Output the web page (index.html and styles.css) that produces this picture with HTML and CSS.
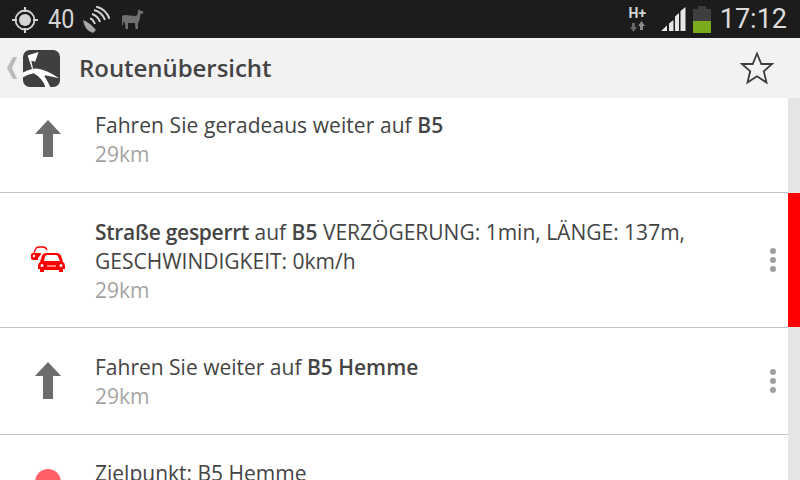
FILE: index.html
```html
<!DOCTYPE html>
<html lang="de">
<head>
    <meta charset="UTF-8">
    <meta name="viewport" content="width=device-width, initial-scale=1.0">
    <title>Routenübersicht</title>
    <link rel="stylesheet" href="styles.css">
</head>
<body>
    <!-- Status bar -->
    <div class="status-bar">
        <div class="status-left">
            <svg class="gps-icon" width="28" height="28" viewBox="0 0 28 28">
                <circle cx="14" cy="14" r="9.500" fill="none" stroke="#d4d4d4" stroke-width="1.800"/>
                <circle cx="14" cy="14" r="6" fill="#d4d4d4"/>
                <path d="M14 1v5M14 22v5M1 14h5M22 14h5" stroke="#d4d4d4" stroke-width="2"/>
            </svg>
            <span class="sat-count">40</span>
            <svg class="dish-icon" width="27" height="27" viewBox="0 0 27 27">
                <path d="M0 14Q6 16 13 24L10 27Q2 25 0 14Z" fill="#a8a8a8"/>
                <path d="M9 8Q15 10 17 16" fill="none" stroke="#d0d0d0" stroke-width="2"/>
                <path d="M11 4Q19 6 22 14" fill="none" stroke="#d0d0d0" stroke-width="2"/>
                <path d="M13 0.500Q23 3 26.500 13" fill="none" stroke="#d0d0d0" stroke-width="2"/>
                <path d="M7 12.500Q10 13 12 18" fill="none" stroke="#d0d0d0" stroke-width="2"/>
            </svg>
            <svg class="llama-icon" width="22" height="21" viewBox="0 0 22 21">
                <path d="M0 8Q0 6 3 6L13 7Q15 7 15.500 5L16 1.500L17 0L18 1.500L21.500 2.500L21 4.500L18.500 5L17.500 11Q17 13 16 13.500V20H13.500L13 14H6V20H3.500L3 14.500L1.500 12L1 16H0Z" fill="#6f6f6f"/>
            </svg>
        </div>
        <div class="status-right">
            <div class="network">
                <span class="network-type">H+</span>
                <svg width="15" height="11" viewBox="0 0 15 11">
                    <path d="M3.500 11L0 6H2V2H5V6H7Z" fill="#666"/>
                    <path d="M11.500 0L15 5H13V9H10V5H8Z" fill="#8a8a8a"/>
                </svg>
            </div>
            <svg class="signal" width="25" height="25" viewBox="0 0 25 25">
                <path d="M0 24L6 18.500V24ZM8 24V16.500L12.500 13V24ZM14 24V9.500L18 6V24ZM19.500 24V4L24.500 0V24Z" fill="#e6e6e6"/>
            </svg>
            <div class="battery">
                <div class="battery-cap"></div>
                <div class="battery-body"><div class="battery-level"></div></div>
            </div>
            <span class="clock">17:12</span>
        </div>
    </div>

    <!-- Action bar -->
    <div class="action-bar">
        <svg class="back-chevron" width="12" height="24" viewBox="0 0 12 24">
            <path d="M11 1L6 12L11 23H7L1 12L7 1Z" fill="#bbb"/>
        </svg>
        <svg class="app-icon" width="37" height="37" viewBox="0 0 38 38">
            <rect width="38" height="38" rx="7" fill="#3f3f3f"/>
            <path d="M0 23Q8 19 14 19Q24 20 37 29L23 26L22 27Q25 31 28 38H23Q20 29 11 24Q5 25 0 28Z" fill="#fff"/>
            <path d="M5 5.500L16 2L12.500 12L8.500 11L10.500 20H9.500L5 6.500Z" fill="#fff"/>
        </svg>
        <h1 class="title">Routenübersicht</h1>
        <svg class="star" width="36" height="34" viewBox="0 0 36 34">
            <path d="M18 2.500L22.300 13H33L24.800 20.300L27.500 31.500L18 25.300L8.500 31.500L11.200 20.300L3 13H13.700Z" fill="none" stroke="#3c3c3c" stroke-width="1.800"/>
        </svg>
    </div>

    <!-- Route list -->
    <div class="route-list">
        <div class="route-row row-first">
            <div class="row-body">
                <div class="row-icon">
                    <svg width="28" height="38" viewBox="0 0 28 38"><path d="M14 0L27 14H19V37H9V14H1Z" fill="#6c6c6c"/></svg>
                </div>
                <div class="row-text">
                    <p class="row-title">Fahren Sie geradeaus weiter auf <b>B5</b></p>
                    <p class="row-dist">29km</p>
                </div>
            </div>
            <div class="row-rail"></div>
        </div>

        <div class="route-row row-blocked">
            <div class="row-body">
                <div class="row-icon">
                    <svg width="34" height="27" viewBox="0 0 34 27">
                        <path d="M3 7L4.500 3Q5.500 1 8 1H12Q15 1 16 4" fill="none" stroke="#f00" stroke-width="1.300"/>
                        <path d="M0 13V9Q0 7 2 7H9L10.500 8L7 12V14H2Z" fill="#f00"/>
                        <circle cx="3" cy="10" r="1.200" fill="#fff"/>
                        <path d="M7 20Q7 17 9 16L11 9.500Q12 7 15 7H26Q29 7 30 9.500L32 16Q34 17 34 20V23H32V26H28V24H13V26H9V23H7Z" fill="#f00"/>
                        <path d="M13 15L14 10.500Q14.500 9 16 9H25Q26.500 9 27 10.500L29 15Z" fill="#fff"/>
                        <circle cx="11" cy="19.500" r="1.500" fill="#fff"/>
                        <circle cx="30" cy="19.500" r="1.500" fill="#fff"/>
                        <path d="M16 20H25" stroke="#fff"/>
                    </svg>
                </div>
                <div class="row-text">
                    <p class="row-title"><b class="closed">Straße gesperrt</b> auf <b>B5</b> VERZÖGERUNG: 1min, LÄNGE: 137m, GESCHWINDIGKEIT: 0km/h</p>
                    <p class="row-dist">29km</p>
                </div>
                <div class="row-menu"><span></span><span></span><span></span></div>
            </div>
            <div class="row-rail rail-red"></div>
        </div>

        <div class="route-row row-normal">
            <div class="row-body">
                <div class="row-icon">
                    <svg width="28" height="38" viewBox="0 0 28 38"><path d="M14 0L27 14H19V37H9V14H1Z" fill="#6c6c6c"/></svg>
                </div>
                <div class="row-text">
                    <p class="row-title">Fahren Sie weiter auf <b>B5 Hemme</b></p>
                    <p class="row-dist">29km</p>
                </div>
                <div class="row-menu"><span></span><span></span><span></span></div>
            </div>
            <div class="row-rail"></div>
        </div>

        <div class="route-row row-last">
            <div class="row-body">
                <div class="row-icon">
                    <div class="dest-dot"></div>
                </div>
                <div class="row-text">
                    <p class="row-title">Zielpunkt: B5 Hemme</p>
                </div>
            </div>
            <div class="row-rail"></div>
        </div>
    </div>
</body>
</html>
```

FILE: styles.css
```css
/* General Page Styles */
html, body {
    height: 480px;
    overflow: hidden;
}

body {
    font-family: "Open Sans", sans-serif;
    background-color: #ffffff;
    color: #444;
    margin: 0;
    padding: 0;
}

/* Status bar */
.status-bar {
    height: 38px;
    background-color: #1c1c1c;
    display: flex;
    justify-content: space-between;
    align-items: center;
    font-family: Roboto, sans-serif;
    color: #d4d4d4;
}

.status-left {
    display: flex;
    align-items: center;
    padding-left: 11px;
}

.gps-icon {
    margin-top: 1px;
}

.sat-count {
    font-size: 26px;
    margin-left: 9px;
    width: 35px;
    transform: scaleX(0.9);
    transform-origin: left;
}

.dish-icon {
    margin-top: 1px;
}

.llama-icon {
    margin-left: 12px;
    margin-top: 1px;
}

.status-right {
    display: flex;
    align-items: center;
    padding-right: 13px;
}

.network {
    display: flex;
    flex-direction: column;
    align-items: center;
    margin-right: 15px;
    width: 17px;
}

.network-type {
    font-size: 14px;
    font-weight: 700;
    line-height: 14px;
    margin-bottom: 1px;
}

.signal {
    margin-right: 7px;
    margin-top: 1px;
}

.battery {
    display: flex;
    flex-direction: column;
    align-items: center;
    margin-top: 1px;
    margin-right: 9px;
}

.battery-cap {
    width: 8px;
    height: 3px;
    background-color: #3e3e3e;
}

.battery-body {
    width: 18px;
    height: 24px;
    background-color: #3e3e3e;
    display: flex;
    align-items: flex-end;
}

.battery-level {
    width: 100%;
    height: 12px;
    background-color: #7bab1a;
}

.clock {
    font-size: 27px;
    color: #dcdcdc;
}

/* Action bar */
.action-bar {
    height: 60px;
    background-color: #f2f2f2;
    display: flex;
    align-items: center;
}

.back-chevron {
    margin-left: 6px;
}

.app-icon {
    margin-left: 5px;
}

.title {
    font-size: 24px;
    font-weight: 600;
    letter-spacing: -0.05px;
    color: #444;
    margin: 0 0 2px 19px;
    flex: 1;
}

.star {
    margin-right: 25px;
}

/* Route list */
.route-list {
    display: flex;
    flex-direction: column;
}

.route-row {
    display: flex;
    background-color: #e4e5e7;
}

.row-body {
    flex: 1;
    min-width: 0;
    display: flex;
    background-color: #ffffff;
    border-bottom: 1px solid #c4c4c4;
}

.row-first {
    height: 95px;
}

.row-blocked {
    height: 135px;
}

.row-normal {
    height: 107px;
}

.row-last {
    height: 60px;
}

.row-last .row-body {
    border-bottom: none;
}

.row-icon {
    width: 95px;
    flex-shrink: 0;
    display: flex;
    justify-content: center;
    padding-left: 1px;
    box-sizing: border-box;
}

.row-first .row-icon {
    padding-top: 22px;
}

.row-blocked .row-icon {
    padding-top: 53px;
    padding-left: 0;
}

.row-normal .row-icon,
.row-last .row-icon {
    padding-top: 34px;
}

.row-text {
    flex: 1;
    min-width: 0;
}

.row-first .row-text {
    padding-top: 13px;
}

.row-blocked .row-text,
.row-normal .row-text {
    padding-top: 25px;
}

.row-last .row-text {
    padding-top: 24px;
}

.row-first .row-title {
    letter-spacing: 0.07px;
}

.row-title {
    font-size: 21px;
    line-height: 29px;
    margin: 0;
    color: #444;
}

.row-title b {
    font-weight: 600;
}

.row-title .closed {
    letter-spacing: -0.28px;
}

.row-dist {
    font-size: 21px;
    line-height: 29px;
    margin: 0;
    color: #a4a4a4;
}

.row-menu {
    width: 30px;
    flex-shrink: 0;
    display: flex;
    flex-direction: column;
    align-items: center;
    justify-content: center;
    gap: 3px;
}

.row-menu span {
    width: 6px;
    height: 6px;
    border-radius: 50%;
    background-color: #a0a0a0;
}

.row-rail {
    width: 12px;
    flex-shrink: 0;
}

.rail-red {
    background-color: #ff0000;
    margin-bottom: 1px;
}

.dest-dot {
    width: 26px;
    height: 26px;
    border-radius: 50%;
    background-color: #ff6068;
}
```
